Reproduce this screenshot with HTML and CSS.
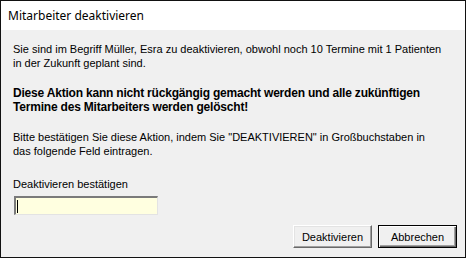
FILE: index.html
```html
<!DOCTYPE html>
<html lang="de">
<head>
<meta charset="UTF-8" />
<title>Mitarbeiter deaktivieren</title>
<link rel="stylesheet" href="styles.css">
</head>
<body>

<div class="window">
  <div class="titlebar">Mitarbeiter deaktivieren</div>

  <div class="content">
    <p class="msg">Sie sind im Begriff Müller, Esra zu deaktivieren, obwohl noch 10 Termine mit 1 Patienten<br>in der Zukunft geplant sind.</p>
    <p class="msg warn">Diese Aktion kann nicht rückgängig gemacht werden und alle zukünftigen<br>Termine des Mitarbeiters werden gelöscht!</p>
    <p class="msg">Bitte bestätigen Sie diese Aktion, indem Sie "DEAKTIVIEREN" in Großbuchstaben in<br>das folgende Feld eintragen.</p>

    <label class="field-label" for="confirm">Deaktivieren bestätigen</label>
    <div class="textbox" id="confirm"><span class="caret"></span></div>

    <div class="buttons">
      <button class="btn">Deaktivieren</button>
      <button class="btn default">Abbrechen</button>
    </div>
  </div>
</div>

</body>
</html>
```

FILE: styles.css
```css
body {
  margin: 0;
  padding: 0;
  background: #fff;
}
.window {
  width: 466px;
  height: 258px;
  box-sizing: border-box;
  border: 1px solid #111;
  display: flex;
  flex-direction: column;
  background: #f0f0f0;
  font-family: 'Liberation Sans', Arial, sans-serif;
  font-size: 11px;
  color: #000;
}
.titlebar {
  height: 29px;
  background: #fff;
  padding-left: 7px;
  display: flex;
  align-items: center;
  font-family: 'Noto Sans', sans-serif;
  font-size: 12px;
  color: #000;
}
.content {
  flex: 1;
  display: flex;
  flex-direction: column;
  padding: 12px 8px 9px 12px;
}
.msg {
  margin: 0 0 16px 0;
  line-height: 14px;
}
.warn {
  font-size: 12px;
  font-weight: 700;
  letter-spacing: -0.2px;
}
.field-label {
  display: block;
  margin-top: 3px;
  line-height: 14px;
}
.textbox {
  margin: 5px 0 0 1px;
  width: 144px;
  height: 19px;
  box-sizing: border-box;
  background: #ffffe0;
  border-top: 2px solid #7a7a7a;
  border-left: 2px solid #7a7a7a;
  border-bottom: 1px solid #e3e3e3;
  border-right: 1px solid #e3e3e3;
  display: flex;
  align-items: center;
  padding-left: 1px;
}
.caret {
  width: 1px;
  height: 13px;
  background: #000;
}
.buttons {
  margin-top: auto;
  display: flex;
  justify-content: flex-end;
  gap: 6px;
}
.btn {
  width: 79px;
  height: 23px;
  margin: 0;
  padding: 0;
  box-sizing: border-box;
  background: #f0f0f0;
  font-family: 'Liberation Sans', Arial, sans-serif;
  font-size: 11px;
  color: #000;
  border: 1px solid;
  border-color: #fff #696969 #696969 #fff;
  box-shadow: inset -1px -1px 0 #a0a0a0, inset 1px 1px 0 #e3e3e3;
}
.btn.default {
  border: 1px solid #000;
  box-shadow: inset 1px 1px 0 #fff, inset -1px -1px 0 #696969, inset -2px -2px 0 #a0a0a0;
}
```
